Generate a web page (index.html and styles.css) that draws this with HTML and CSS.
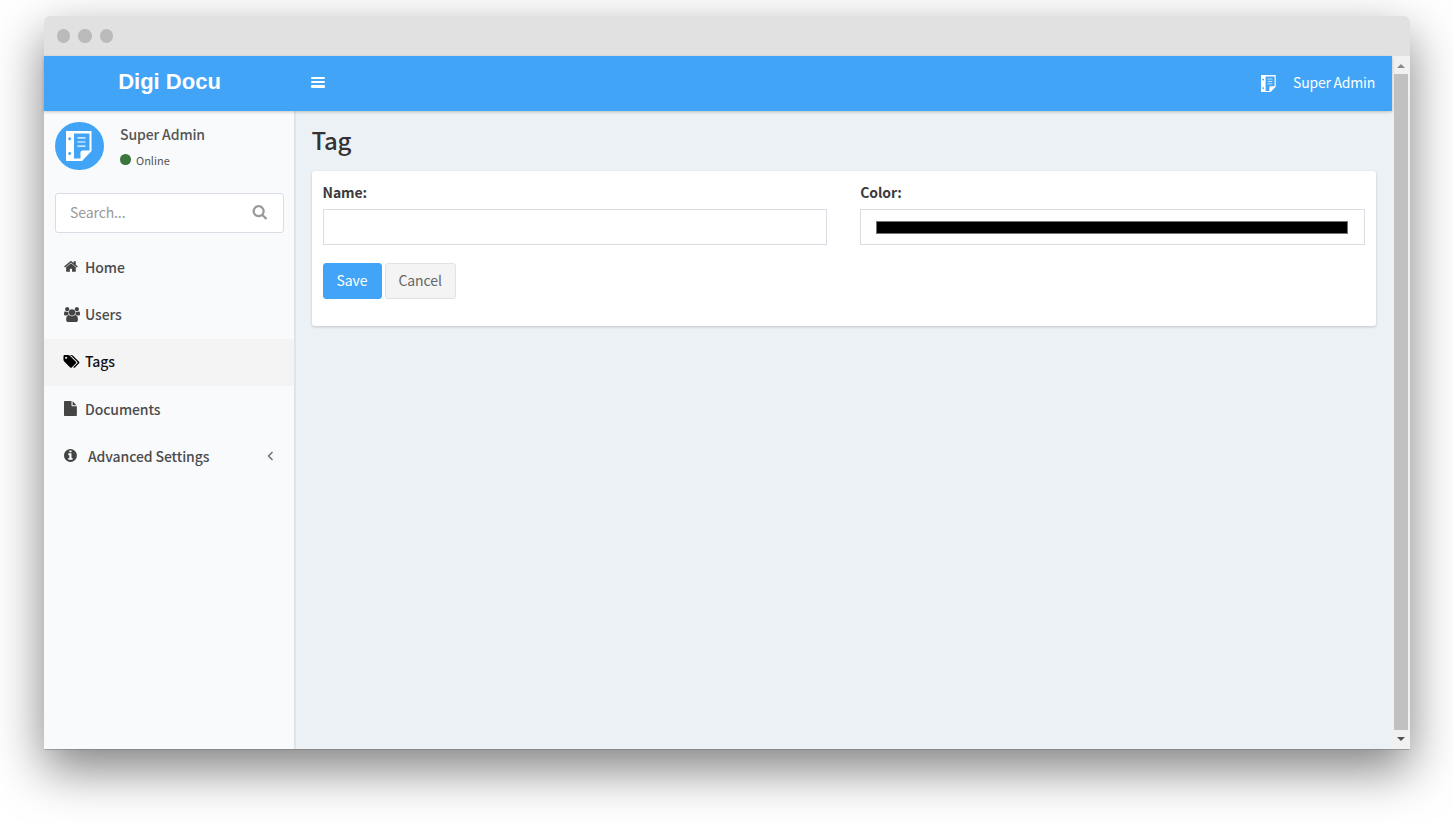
FILE: index.html
```html
<!DOCTYPE html>
<html lang="en">
<head>
<meta charset="utf-8">
<title>Digi Docu</title>
<link rel="stylesheet" href="styles.css">
</head>
<body>
<svg class="defs" width="0" height="0">
  <symbol id="sheet" viewBox="0 0 26 30">
    <path fill="currentColor" fill-rule="evenodd" d="M0 0H25.500V20L16 30H0Z M8 2.500V27.500H14.500V21.500Q14.500 19.500 16.500 19.500H23.500V2.500Z M3.700 6.200a1.500 1.500 0 1 0 .01 0Z M3.700 21a1.500 1.500 0 1 0 .01 0Z"/>
    <path stroke="currentColor" stroke-width="1.200" d="M11.500 6.800H19.500M11.500 11H19.500M11.500 15.200H19.500"/>
  </symbol>
</svg>
<div class="window">
  <div class="titlebar"><i class="dot"></i><i class="dot"></i><i class="dot"></i></div>
  <div class="viewport">
    <div class="app">
      <header class="header">
        <div class="brand">Digi Docu</div>
        <div class="toggle"><i></i><i></i><i></i></div>
        <div class="account"><svg class="account-icon"><use href="#sheet"/></svg><span>Super Admin</span></div>
      </header>
      <div class="body">
        <aside class="sidebar">
          <div class="user">
            <div class="avatar"><svg class="avatar-icon"><use href="#sheet"/></svg></div>
            <div class="who"><div class="who-name">Super Admin</div><div class="status"><i class="online"></i><span>Online</span></div></div>
          </div>
          <div class="search"><span>Search...</span><svg class="search-icon" viewBox="0 0 1792 1792"><path d="M1216 832q0-185-131.500-316.500t-316.500-131.500-316.500 131.500-131.500 316.500 131.500 316.500 316.500 131.500 316.500-131.500 131.500-316.500zm512 832q0 52-38 90t-90 38q-54 0-90-38l-343-342q-179 124-399 124-143 0-273.500-55.500t-225-150-150-225-55.500-273.500 55.500-273.500 150-225 225-150 273.500-55.500 273.500 55.500 225 150 150 225 55.500 273.500q0 220-124 399l343 343q37 37 37 90z"/></svg></div>
          <nav class="menu">
            <a class="item"><svg class="icon" viewBox="64 0 1792 1792"><path d="M1472 992v480q0 26-19 45t-45 19h-384v-384h-256v384h-384q-26 0-45-19t-19-45v-480q0-1 .5-3t.5-3l575-474 575 474q1 2 1 6zm223-69l-62 74q-8 9-21 11h-3q-13 0-21-7l-692-577-692 577q-12 8-24 7-13-2-21-11l-62-74q-8-10-7-23.500t11-21.500l719-599q32-26 76-26t76 26l244 204v-195q0-14 9-23t23-9h192q14 0 23 9t9 23v408l219 182q10 8 11 21.500t-7 23.500z"/></svg><span>Home</span></a>
            <a class="item"><svg class="icon" viewBox="-64 0 1792 1792"><path d="M529 896q-162 5-265 128h-134q-82 0-138-40.500t-56-118.500q0-353 124-353 6 0 43.500 21t97.500 42.500 119 21.500q67 0 133-23-5 37-5 66 0 139 81 256zm1071 637q0 120-73 189.500t-194 69.500h-874q-121 0-194-69.500t-73-189.500q0-53 3.500-103.500t14-109 26.500-108.500 43-97.500 62-81 85.500-53.500 111.500-20q10 0 43 21.500t73 48 107 48 135 21.500 135-21.500 107-48 73-48 43-21.500q61 0 111.500 20t85.500 53.500 62 81 43 97.500 26.500 108.500 14 109 3.500 103.500zm-1024-1277q0 106-75 181t-181 75-181-75-75-181 75-181 181-75 181 75 75 181zm704 384q0 159-112.500 271.500t-271.500 112.500-271.500-112.500-112.500-271.500 112.500-271.500 271.500-112.500 271.500 112.500 112.500 271.500zm576 225q0 78-56 118.500t-138 40.500h-134q-103-123-265-128 81-117 81-256 0-29-5-66 66 23 133 23 59 0 119-21.500t97.500-42.500 43.500-21q124 0 124 353zm-128-609q0 106-75 181t-181 75-181-75-75-181 75-181 181-75 181 75 75 181z"/></svg><span>Users</span></a>
            <a class="item active"><svg class="icon" viewBox="0 0 1792 1792"><path d="M384 448q0-53-37.500-90.500t-90.500-37.500-90.500 37.500-37.500 90.500 37.500 90.500 90.500 37.500 90.500-37.500 37.500-90.500zm1067 576q0 53-37 90l-491 492q-39 37-91 37-53 0-90-37l-715-716q-38-37-64.500-101t-26.500-117v-416q0-52 38-90t90-38h416q53 0 117 26.500t102 64.500l715 714q37 39 37 91zm384 0q0 53-37 90l-491 492q-39 37-91 37-36 0-59-14t-53-45l470-470q37-37 37-90 0-52-37-91l-715-714q-38-38-102-64.500t-117-26.500h224q53 0 117 26.500t102 64.500l715 714q37 39 37 91z"/></svg><span>Tags</span></a>
            <a class="item"><svg class="icon" viewBox="128 0 1792 1792"><path d="M1152 512v-472q22 14 36 28l408 408q14 14 28 36h-472zm-128 32q0 40 28 68t68 28h544v1056q0 40-28 68t-68 28h-1344q-40 0-68-28t-28-68v-1600q0-40 28-68t68-28h800v544z"/></svg><span>Documents</span></a>
            <a class="item wide"><svg class="icon" viewBox="128 0 1792 1792"><path d="M1152 1376v-160q0-14-9-23t-23-9h-96v-512q0-14-9-23t-23-9h-320q-14 0-23 9t-9 23v160q0 14 9 23t23 9h96v320h-96q-14 0-23 9t-9 23v160q0 14 9 23t23 9h448q14 0 23-9t9-23zm-128-896v-160q0-14-9-23t-23-9h-192q-14 0-23 9t-9 23v160q0 14 9 23t23 9h192q14 0 23-9t9-23zm640 416q0 209-103 385.500t-279.500 279.500-385.500 103-385.500-103-279.500-279.500-103-385.500 103-385.500 279.500-279.500 385.500-103 385.500 103 279.500 279.500 103 385.500z"/></svg><span>Advanced Settings</span><svg class="chevron" viewBox="0 0 7 10"><path d="M5.500 1L1.500 5L5.500 9"/></svg></a>
          </nav>
        </aside>
        <main class="content">
          <h1 class="title">Tag</h1>
          <section class="card">
            <div class="fields">
              <div class="field"><div class="label">Name:</div><div class="input"></div></div>
              <div class="field"><div class="label">Color:</div><div class="input"><div class="swatch"></div></div></div>
            </div>
            <div class="actions"><div class="btn primary">Save</div><div class="btn">Cancel</div></div>
          </section>
        </main>
      </div>
    </div>
    <div class="scrollbar">
      <svg class="arrow" viewBox="0 0 8 4"><path fill="#8a8a8a" d="M0 4L4 0L8 4Z"/></svg>
      <div class="thumb"></div>
      <svg class="arrow" viewBox="0 0 8 4"><path fill="#505050" d="M0 0H8L4 4Z"/></svg>
    </div>
  </div>
</div>
</body>
</html>
```
FILE: styles.css
```css
* { box-sizing: border-box; }
body { margin: 0; height: 825px; padding: 16px 43px 0 44px; overflow: hidden; background: #fff; font-family: "Noto Sans CJK SC", "Noto Sans", sans-serif; font-size: 14px; letter-spacing: -0.1px; color: #444; }
.defs { position: absolute; }
.window { width: 1366px; height: 733px; display: flex; flex-direction: column; border-radius: 6px 6px 0 0; box-shadow: 0 1px 0 -0.5px #777, 0 20px 50px rgba(0,0,0,.5); }
.titlebar { height: 40px; flex: none; display: flex; align-items: center; gap: 8px; padding-left: 13px; background: #e1e1e1; border-radius: 6px 6px 0 0; }
.dot { width: 13.300px; height: 13.300px; border-radius: 50%; background: #bababa; }
.viewport { flex: 1; display: flex; min-height: 0; }
.app { width: 1348px; display: flex; flex-direction: column; }
.header { height: 54.500px; flex: none; display: flex; align-items: center; background: #42a4f7; color: #fff; box-shadow: 0 1px 3px rgba(0,0,0,.22); z-index: 1; }
.brand { width: 251px; text-align: center; font: bold 22px/52px "Liberation Sans", Arial, sans-serif; height: 55px; letter-spacing: 0; }
.toggle { width: 14px; margin: -2px 0 0 16px; display: grid; gap: 2px; }
.toggle i { height: 2.300px; background: #fff; border-radius: 1px; }
.account { margin-left: auto; padding: 0 17px 3px 0; display: flex; align-items: center; gap: 17px; letter-spacing: -0.22px; }
.account-icon { width: 15px; height: 17.500px; margin-top: 3px; }
.body { flex: 1; display: flex; }
.sidebar { width: 252px; background: #f9fafc; border-right: 2px solid #dfe3ea; }
.user { display: flex; padding: 11px 11px 0; gap: 16.500px; height: 82px; }
.avatar { width: 48.500px; height: 48.500px; border-radius: 50%; background: #42a4f7; color: #fff; display: flex; align-items: center; justify-content: center; }
.avatar-icon { width: 26px; height: 30px; }
.who-name { line-height: 25px; font-weight: 500; color: #555; letter-spacing: -0.12px; }
.status { display: flex; align-items: center; gap: 5.500px; font-size: 11px; line-height: 26px; color: #555; letter-spacing: 0; }
.online { width: 10.500px; height: 10.500px; border-radius: 50%; background: #3c763d; }
.search { height: 40px; margin: 0 10.500px 0 11px; padding: 0 15px 2px 14px; border: 1px solid #d8dde6; border-radius: 3px; background: #fff; display: flex; align-items: center; justify-content: space-between; color: #999; }
.search-icon { width: 15.500px; height: 15.500px; margin-top: 1px; fill: #999; }
.menu { padding-top: 11.500px; }
.item { height: 47.250px; padding: 0 20.500px 1.500px 19.500px; display: flex; align-items: center; font-weight: 500; color: #4c4c4c; }
.item span { margin-left: 6.500px; }
.item.wide span { margin-left: 9.500px; }
.icon { width: 15px; height: 15px; overflow: visible; fill: #444; }
.active { background: #f4f4f5; color: #111; }
.active .icon { fill: #000; }
.chevron { width: 7px; height: 10px; margin: 1px 0 0 auto; fill: none; stroke: #666; stroke-width: 1.300; }
.content { flex: 1; background: #ecf1f6; padding: 13px 16px 0 15.500px; }
.title { margin: 0; font-size: 24px; line-height: 32px; font-weight: 500; color: #333; letter-spacing: -0.3px; }
.card { margin-top: 15.500px; height: 154.500px; border-radius: 3px; padding: 9px 11px; background: #fff; box-shadow: 0 1px 3px rgba(0,0,0,.18); }
.fields { display: grid; grid-template-columns: 1fr 1fr; gap: 33px; }
.label { line-height: 24px; margin-bottom: 4.500px; font-weight: 700; color: #3b3b3b; }
.input { height: 36.500px; border: 1px solid #dbdbe4; background: #fff; padding: 11px 16px 0 15px; }
.swatch { height: 13px; background: #000; border: 1px solid #777; }
.actions { display: flex; gap: 3px; margin-top: 17.500px; }
.btn { height: 36px; line-height: 33px; padding: 0 13px; border: 1px solid #e2e2e2; border-radius: 3px; background: #f4f4f4; color: #666; }
.primary { width: 59px; background: #42a4f7; border-color: #42a4f7; color: #fff; }
.scrollbar { width: 18px; background: #f1f1f1; display: flex; flex-direction: column; align-items: center; padding: 8px 0; }
.arrow { width: 8px; height: 4px; flex: none; }
.thumb { width: 14px; flex: 1; margin: 6px 0 7px; background: #c1c1c1; }
```
